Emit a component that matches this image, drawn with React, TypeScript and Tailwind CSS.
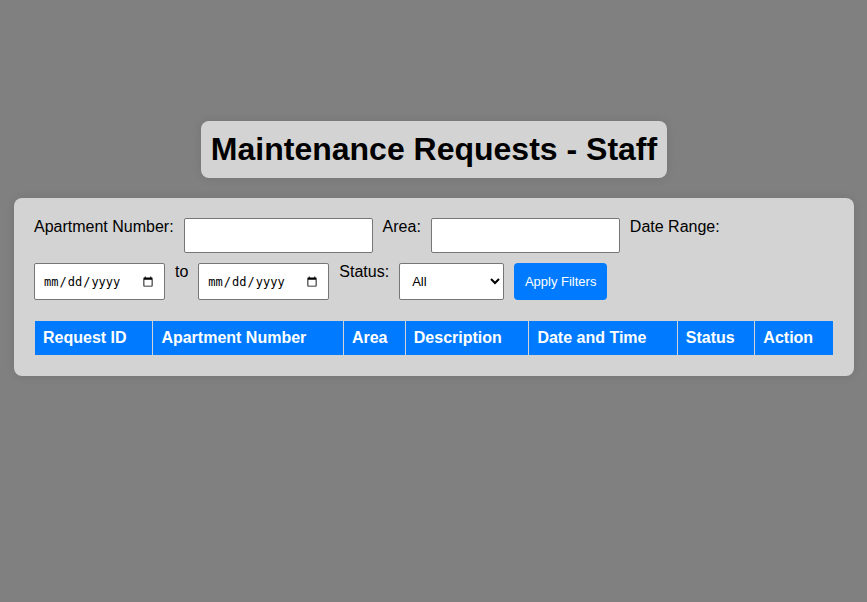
import React from "react";

const columns = [
  "Request ID",
  "Apartment Number",
  "Area",
  "Description",
  "Date and Time",
  "Status",
  "Action",
];

const field = "rounded-[2px] border border-[#767676] bg-white p-2 text-black";
const textField = `${field} h-[35px] w-[189px] text-[13px]`;
const dateField = `${field} h-[37px] w-[131px] font-['DejaVu_Sans_Mono',monospace] text-xs`;

export default function App() {
  return (
    <main className="flex min-h-screen flex-col items-center justify-center bg-[#808080] pr-[13px] pb-[105px] pl-[14px] font-['Liberation_Sans',Arial,sans-serif] text-base leading-[18px] text-black">
      <h1 className="mb-5 rounded-lg bg-[#d3d3d3] p-[10px] text-[32px] leading-[37px] font-bold shadow-[0_0_10px_rgba(0,0,0,0.1)]">
        Maintenance Requests - Staff
      </h1>
      <section className="w-full max-w-[1200px] rounded-lg bg-[#d3d3d3] p-5 shadow-[0_0_10px_rgba(0,0,0,0.1)]">
        <form className="mb-5 flex flex-wrap gap-[10px]" onSubmit={(e) => e.preventDefault()}>
          <label htmlFor="apartment">Apartment Number:</label>
          <input id="apartment" type="text" className={textField} />
          <label htmlFor="area">Area:</label>
          <input id="area" type="text" className={textField} />
          <label htmlFor="start">Date Range:</label>
          <input id="start" type="date" className={dateField} />
          <label htmlFor="end">to</label>
          <input id="end" type="date" className={dateField} />
          <label htmlFor="status">Status:</label>
          <select id="status" defaultValue="All" className={`${field} h-[37px] w-[105px] text-[13px]`}>
            <option>All</option>
            <option>Pending</option>
            <option>In Progress</option>
            <option>Completed</option>
          </select>
          <button type="submit" className="h-[37px] w-[93px] rounded-[4px] bg-[#007bff] text-[13px] text-white">
            Apply Filters
          </button>
        </form>
        <table className="w-full border-collapse">
          <thead>
            <tr>
              {columns.map((column) => (
                <th key={column} className="border border-[#d3d3d3] bg-[#007bff] p-2 text-left font-bold text-white">
                  {column}
                </th>
              ))}
            </tr>
          </thead>
        </table>
      </section>
    </main>
  );
}
